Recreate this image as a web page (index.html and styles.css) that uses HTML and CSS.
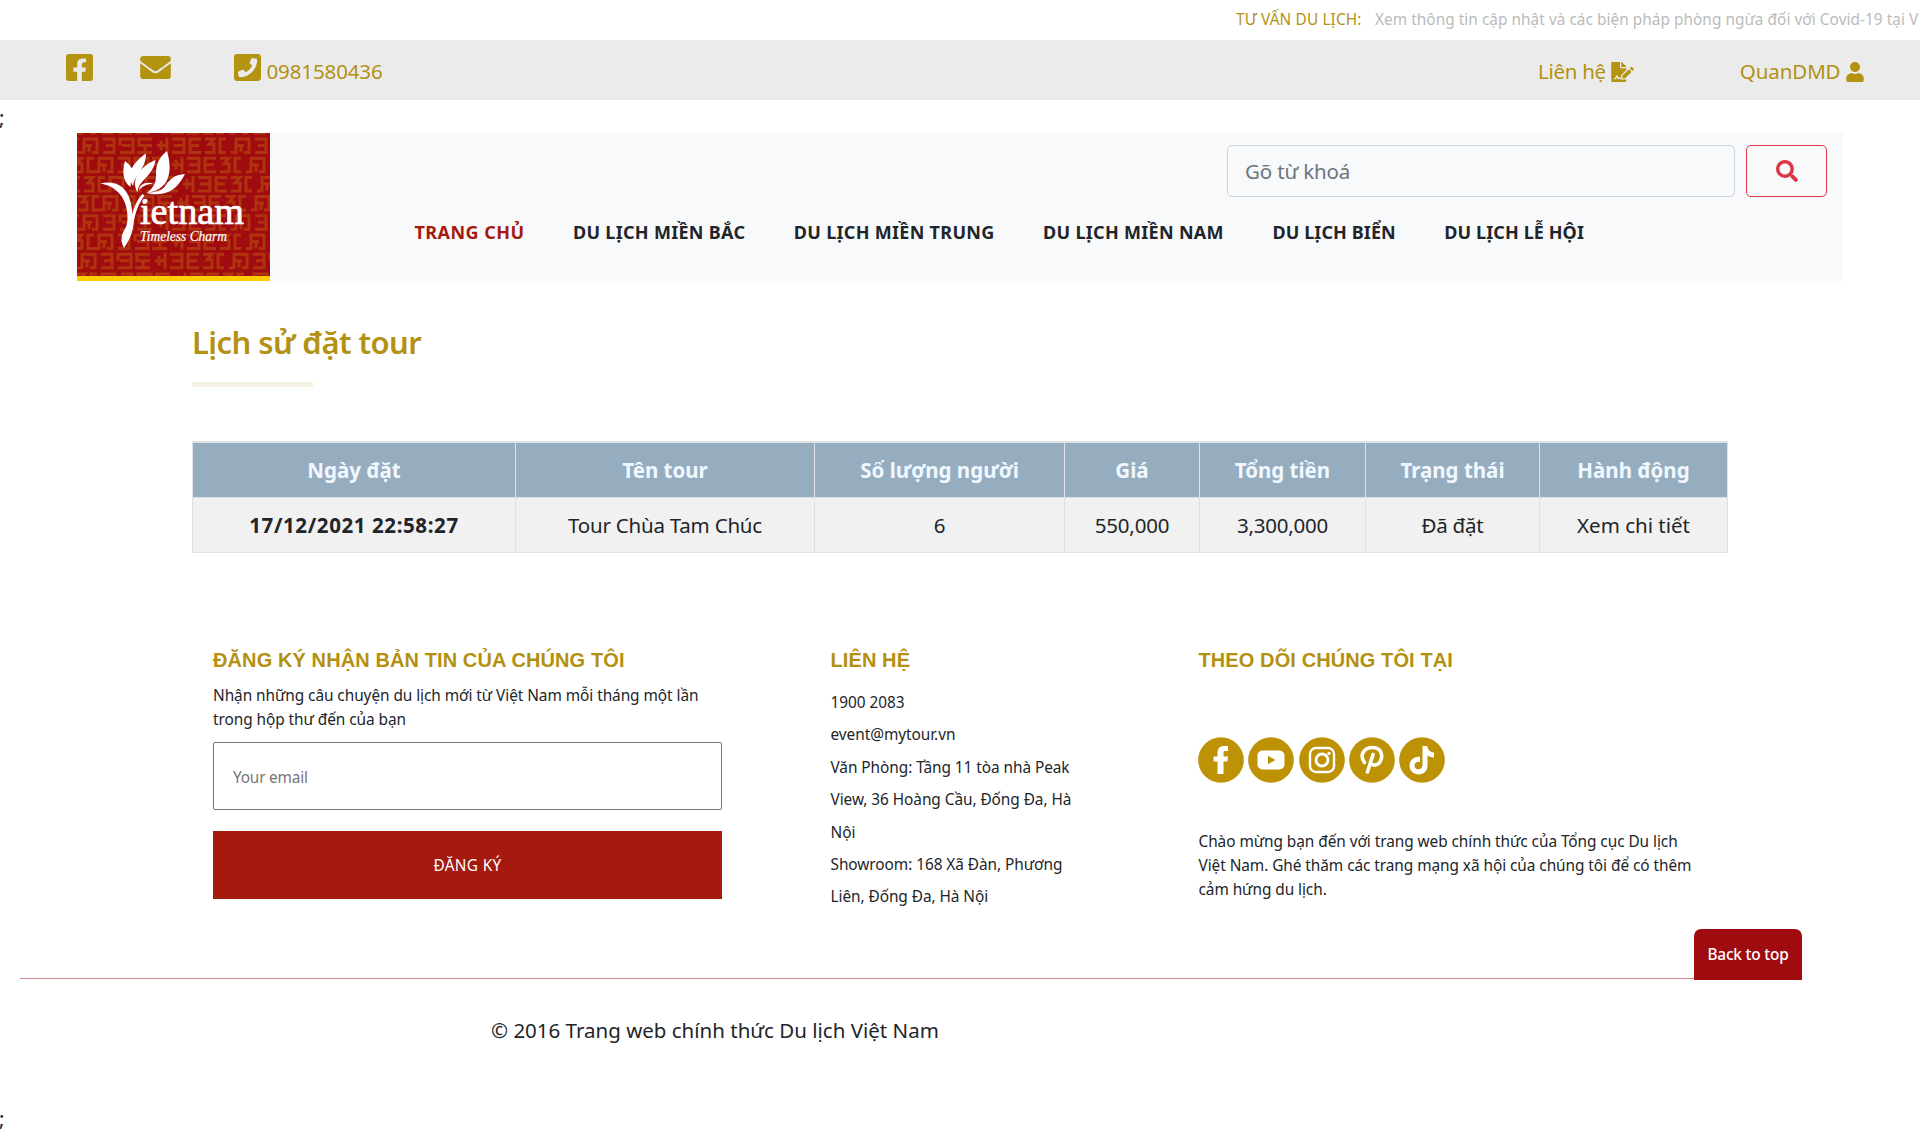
FILE: index.html
```
<!DOCTYPE html>
<html lang="vi">
<head>
<meta charset="utf-8">
<title>Lịch sử đặt tour</title>
<link rel="stylesheet" href="styles.css">
</head>
<body>
<div class="notice"><span class="notice-label">TƯ VẤN DU LỊCH:</span><span class="notice-text">Xem thông tin cập nhật và các biện pháp phòng ngừa đối với Covid-19 tại V</span></div>

<div class="contact-bar">
  <svg class="ico ico-fb" viewBox="0 32 448 448"><path d="M400 32H48A48 48 0 0 0 0 80v352a48 48 0 0 0 48 48h137.25V327.69h-63V256h63v-54.64c0-62.15 37-96.48 93.67-96.48 27.14 0 55.52 4.84 55.52 4.84v61h-31.27c-30.81 0-40.42 19.12-40.42 38.73V256h68.78l-11 71.69h-57.78V480H400a48 48 0 0 0 48-48V80a48 48 0 0 0-48-48z"/></svg>
  <svg class="ico ico-mail" viewBox="0 64 512 384"><path d="M502.3 190.8c3.9-3.1 9.7-.2 9.7 4.7V400c0 26.5-21.5 48-48 48H48c-26.5 0-48-21.5-48-48V195.6c0-5 5.7-7.8 9.7-4.7 22.4 17.4 52.1 39.5 154.1 113.6 21.1 15.4 56.7 47.8 92.2 47.6 35.7.3 72-32.8 92.3-47.6 102-74.1 131.6-96.3 154-113.7zM256 320c23.2.4 56.6-29.2 73.4-41.4 132.7-96.3 142.8-104.7 173.4-128.7 5.8-4.5 9.2-11.5 9.2-18.9v-19c0-26.5-21.5-48-48-48H48c-26.5 0-48 21.5-48 48v19c0 7.4 3.4 14.3 9.2 18.9 30.6 23.9 40.7 32.4 173.4 128.7 16.8 12.2 50.2 41.8 73.4 41.4z"/></svg>
  <svg class="ico ico-phone" viewBox="0 32 448 448"><path d="M400 32H48C21.49 32 0 53.49 0 80v352c0 26.51 21.49 48 48 48h352c26.51 0 48-21.49 48-48V80c0-26.51-21.49-48-48-48zM94 416c-7.033 0-13.057-4.873-14.616-11.627l-14.998-65a15 15 0 0 1 8.707-17.16l69.998-29.999a15 15 0 0 1 17.518 4.289l30.997 37.885c48.944-22.963 88.297-62.858 110.781-110.78l-37.886-30.997a15.001 15.001 0 0 1-4.289-17.518l30-69.998a15 15 0 0 1 17.16-8.707l65 14.998A14.997 14.997 0 0 1 384 126c0 160.292-129.945 290-290 290z"/></svg>
  <span class="phone">0981580436</span>
  <a class="bar-link contact">Liên hệ <svg class="ico" width="23" height="20" viewBox="0 0 576 512"><path d="M218.17 424.14c-2.95-5.92-8.09-6.52-10.17-6.52s-7.22.59-10.02 6.19l-7.67 15.34c-6.37 12.78-25.03 11.37-29.48-2.09L144 386.59l-10.61 31.88c-5.89 17.66-22.38 29.53-41 29.53H80c-8.84 0-16-7.16-16-16s7.16-16 16-16h12.39c4.83 0 9.11-3.08 10.64-7.66l18.19-54.64c3.3-9.81 12.44-16.41 22.78-16.41s19.48 6.59 22.77 16.41l13.88 41.64c19.75-16.19 54.06-9.7 66 14.16 1.89 3.78 5.49 5.95 9.36 6.26v-82.12l128-127.09V160H248c-13.2 0-24-10.8-24-24V0H24C10.7 0 0 10.7 0 24v464c0 13.3 10.7 24 24 24h336c13.3 0 24-10.7 24-24v-40l-128-.11c-16.12-.31-30.58-9.28-37.83-23.75zM384 121.9c0-6.3-2.5-12.4-7-16.9L279.1 7c-4.5-4.5-10.6-7-17-7H256v128h128v-6.1zm-96 225.06V416h68.99l161.68-162.78-67.88-67.88L288 346.96zm280.54-179.63l-31.87-31.87c-9.94-9.94-26.07-9.94-36.01 0l-27.25 27.25 67.88 67.88 27.25-27.25c9.95-9.94 9.95-26.07 0-36.01z"/></svg></a>
  <a class="bar-link user">QuanDMD <svg class="ico" width="18" height="20" viewBox="0 0 448 512"><path d="M224 256c70.7 0 128-57.3 128-128S294.7 0 224 0 96 57.3 96 128s57.3 128 128 128zm89.6 32h-16.7c-22.2 10.2-46.9 16-72.9 16s-50.6-5.8-72.9-16h-16.7C60.2 288 0 348.2 0 422.4V464c0 26.5 21.5 48 48 48h352c26.5 0 48-21.5 48-48v-41.6c0-74.2-60.2-134.4-134.4-134.4z"/></svg></a>
</div>
<div class="stray">;</div>

<header class="header">
  <svg class="logo" width="193" height="148" viewBox="0 0 193 148">
    <defs>
      <g id="motif" fill="none" stroke="#b0330f" stroke-width="3">
        <path d="M0 15h5V1.500h13V15h-5M5 8h8M10 8v7M18 8"/>
        <path d="M24 1.500h11V15H24M27 8h8"/>
        <path d="M41 8V1.500h13V15H41M43 8h9"/>
        <path d="M58 1.500h15M60 1.500V8h13M66 8v7M58 15h15"/>
        <path d="M88 0v16M78 8h10M82 3v10"/>
        <path d="M93 1.500h12V15H93M95 8h10"/>
        <path d="M122 1.500h-11V15h11M111 8h9"/>
        <path d="M126 1.500h9L130 7h5v8h-9"/>
        <path d="M147 1.500h-6V15h6"/>
      </g>
      <g id="strip"><use href="#motif" x="-147"/><use href="#motif"/><use href="#motif" x="152"/></g>
      <clipPath id="frame"><path d="M0 0h193v143H0z"/></clipPath>
    </defs>
    <path fill="#9f0b0e" d="M0 0h193v148H0z"/>
    <g clip-path="url(#frame)">
      <use href="#strip" x="0" y="-14.700"/>
      <use href="#strip" x="2" y="4.500"/>
      <use href="#strip" x="17" y="23.700"/>
      <use href="#strip" x="28" y="42.900"/>
      <use href="#strip" x="22" y="62.100"/>
      <use href="#strip" x="2" y="81.300"/>
      <use href="#strip" x="17" y="100.500"/>
      <use href="#strip" x="0" y="119.700"/>
      <use href="#strip" x="20" y="139.500"/>
    </g>
    <path fill="#fc0" d="M0 143h193v5H0z"/>
    <g fill="#fff">
      <path d="M23 50.500C38 47 49 53 53 67c1.500 5 2 9 2.300 14C57 74 60 67 65.500 61l2 1.500C61 71 58 81 56.500 91c-.8 9-4.500 17-9.500 24-3-6-4-12 1.500-20 2-4 2.500-9 1.500-17C48 63 38 52.500 23 50.500z"/>
      <path d="M48 28c-3 9-2.500 21 5.500 26 .3-6 1.500-10 3-13C56 35 52 31 48 28z"/>
      <path d="M69 20.500C57 29 48 40 56 53c2-12 13-17 13-32.500z"/>
      <path d="M78.500 27C64 33 53 46 60.500 59.500 61 47 76 44 78.500 27z"/>
      <path d="M90 18C79 27 79 35 79 43c0 7-3 12-9 17 20-3 27-18 20-42z"/>
      <path d="M108 41c-11 1-15 5-19 11s-10 7-20 8c23 5 32-6 39-19z"/>
      <path d="M62 57c1-6 8-9 14-6-6-.5-10 2-14 6z"/>
      <circle cx="67.500" cy="69" r="2"/>
    </g>
    <text class="logo-name" x="63" y="91" textLength="104" lengthAdjust="spacingAndGlyphs">ietnam</text>
    <text class="logo-tag" x="63" y="108" textLength="87" lengthAdjust="spacingAndGlyphs">Timeless Charm</text>
  </svg>
  <div class="header-main">
    <form class="search">
      <div class="search-box">Gõ từ khoá</div>
      <div class="search-btn"><svg width="22" height="22" viewBox="0 0 512 512" fill="#dc3545"><path d="M505 442.700L405.300 343c-4.500-4.500-10.600-7-17-7H372c27.600-35.300 44-79.700 44-128C416 93.100 322.900 0 208 0S0 93.100 0 208s93.100 208 208 208c48.300 0 92.700-16.400 128-44v16.300c0 6.400 2.500 12.500 7 17l99.700 99.700c9.400 9.400 24.600 9.400 33.900 0l28.300-28.300c9.400-9.400 9.400-24.600.1-34zM208 336c-70.700 0-128-57.200-128-128 0-70.700 57.200-128 128-128 70.700 0 128 57.200 128 128 0 70.700-57.200 128-128 128z"/></svg></div>
    </form>
    <nav class="nav">
      <a class="active">TRANG CHỦ</a><a>DU LỊCH MIỀN BẮC</a><a>DU LỊCH MIỀN TRUNG</a><a>DU LỊCH MIỀN NAM</a><a class="tight">DU LỊCH BIỂN</a><a class="tight">DU LỊCH LỄ HỘI</a>
    </nav>
  </div>
</header>

<main class="content">
  <h1>Lịch sử đặt tour</h1>
  <div class="rule"></div>
  <table class="orders">
    <colgroup><col style="width:323px"><col style="width:299px"><col style="width:250px"><col style="width:135px"><col style="width:166px"><col style="width:174px"><col style="width:188px"></colgroup>
    <thead><tr><th>Ngày đặt</th><th>Tên tour</th><th>Số lượng người</th><th>Giá</th><th>Tổng tiền</th><th>Trạng thái</th><th>Hành động</th></tr></thead>
    <tbody><tr><th class="date">17/12/2021 22:58:27</th><td>Tour Chùa Tam Chúc</td><td>6</td><td>550,000</td><td>3,300,000</td><td>Đã đặt</td><td class="detail">Xem chi tiết</td></tr></tbody>
  </table>
</main>

<footer class="footer">
  <section class="newsletter">
    <h2>ĐĂNG KÝ NHẬN BẢN TIN CỦA CHÚNG TÔI</h2>
    <p>Nhận những câu chuyện du lịch mới từ Việt Nam mỗi tháng một lần<br>trong hộp thư đến của bạn</p>
    <div class="email">Your email</div>
    <div class="submit">ĐĂNG KÝ</div>
  </section>
  <section class="office">
    <h2>LIÊN HỆ</h2>
    <p>1900 2083<br>event@mytour.vn<br>Văn Phòng: Tầng 11 tòa nhà Peak<br>View, 36 Hoàng Cầu, Đống Đa, Hà<br>Nội<br>Showroom: 168 Xã Đàn, Phương<br>Liên, Đống Đa, Hà Nội</p>
  </section>
  <section class="follow">
    <h2>THEO DÕI CHÚNG TÔI TẠI</h2>
    <div class="social">
      <svg viewBox="0 0 46 46"><circle cx="23" cy="23" r="22.800"/><path fill="#fff" d="M19.500 37V24.500h-4v-5h4V16c0-4.500 2.500-7 6.500-7H30v5h-2.500c-1.500 0-2 .8-2 2v3.500H30l-.6 5h-3.900V37z"/></svg>
      <svg viewBox="0 0 46 46"><circle cx="23" cy="23" r="22.800"/><rect x="9.500" y="13.500" width="27" height="19" rx="5" fill="#fff"/><path d="M20 18.800v8.400l7.500-4.200z"/></svg>
      <svg viewBox="0 0 46 46"><circle cx="23" cy="23" r="22.800"/><g fill="none" stroke="#fff" stroke-width="2.400"><rect x="11" y="11" width="24" height="24" rx="6"/><circle cx="23" cy="23" r="6" stroke-width="2.800"/></g><circle cx="30" cy="16.500" r="1.700" fill="#fff"/></svg>
      <svg viewBox="0 0 46 46"><circle cx="23" cy="23" r="22.800"/><path fill="none" stroke="#fff" stroke-width="3.600" stroke-linecap="round" d="M15.500 25.500C10 18 15 10.500 23.500 10.500c7 0 10 5 9 10.500-1.200 7-8 9-11 5M24 17.500L18.500 35"/></svg>
      <svg viewBox="0 0 46 46"><circle cx="23" cy="23" r="22.800"/><path fill="#fff" d="M23.500 9h4.800c.5 4 3 6.200 6.700 6.500v5c-2.500 0-4.700-.8-6.500-2v10c0 12-17.500 11.500-18 .5 0-6 4.500-9.800 10.500-9.200v5.200c-3-.7-5.500 1-5.500 3.800 0 4.700 8 5 8-1z"/></svg>
    </div>
    <p>Chào mừng bạn đến với trang web chính thức của Tổng cục Du lịch<br>Việt Nam. Ghé thăm các trang mạng xã hội của chúng tôi để có thêm<br>cảm hứng du lịch.</p>
  </section>
</footer>
<div class="bottom-line"><a class="to-top">Back to top</a></div>
<div class="copyright">© 2016 Trang web chính thức Du lịch Việt Nam</div>
<div class="stray stray-end">;</div>
</body>
</html>
```
FILE: styles.css
```
* { box-sizing: border-box; }
body { margin: 0; height: 1134px; overflow: hidden; background: #fff; color: #212529; font: 20.5px/32px "Noto Sans", "Open Sans", sans-serif; }
svg { display: block; flex: none; }
h1, h2, p { margin: 0; }

.notice { display: flex; height: 40px; padding-left: 1236px; font-size: 15.4px; line-height: 40px; white-space: nowrap; overflow: hidden; }
.notice-label { width: 139px; color: #b39113; letter-spacing: .12px; }
.notice-text { color: #bbb; letter-spacing: .03px; }

.contact-bar { display: flex; height: 60px; padding-left: 65.500px; background: #ebebeb; color: #b39113; line-height: 62px; white-space: nowrap; }
.ico { fill: #b39310; }
.ico-fb { width: 27px; height: 27px; margin-top: 14px; }
.ico-mail { width: 31px; height: 23px; margin: 16px 63px 0 47.500px; }
.ico-phone { width: 27px; height: 27px; margin: 14px 5.500px 0 0; }
.phone { letter-spacing: -.12px; }
.bar-link { display: flex; gap: 5px; letter-spacing: -.3px; }
.bar-link .ico { margin-top: 22px; }
.contact { margin-left: auto; }
.user { margin: 0 56.500px 0 106px; letter-spacing: -.1px; }

.stray { height: 33px; margin-left: -1px; line-height: 34px; }

.header { display: flex; width: 1766px; height: 148px; margin-left: 77px; background: #f8f9fb; }
.logo-name { font: 38px "Liberation Serif", serif; fill: #fff; stroke: #fff; stroke-width: .7px; }
.logo-tag { font: italic 14px "Liberation Serif", serif; fill: #fff; stroke: #fff; stroke-width: .2px; }
.header-main { flex: 1; padding: 12px 16px 0 144.500px; }
.search { display: flex; justify-content: flex-end; gap: 11px; }
.search-box { width: 508px; height: 52px; padding-left: 17px; border: 1px solid #ced4da; border-radius: 5px; color: #6c757d; line-height: 51px; letter-spacing: -.17px; }
.search-btn { display: grid; place-items: center; width: 81px; height: 52px; border: 1px solid #dc3545; border-radius: 5px; }
.nav { display: flex; gap: 48.500px; margin-top: 19px; font-size: 18px; font-weight: 700; line-height: 32px; letter-spacing: .3px; white-space: nowrap; }
.nav .active { color: #a6190f; letter-spacing: .45px; }
.nav .tight { letter-spacing: .1px; }

.content { width: 1536px; margin: 0 auto; }
h1 { padding-top: 41px; color: #b39113; font-size: 31px; font-weight: 600; line-height: 41px; letter-spacing: -.58px; }
.rule { width: 121px; height: 5px; margin: 19px 0 54px; background: #f6f3e4; }
.orders { width: 1535px; table-layout: fixed; border-collapse: collapse; text-align: center; }
.orders th, .orders td { height: 55px; padding: 0; border: 1px solid #dee2e6; line-height: 54px; }
.orders thead th { border-top-width: 2px; background: #96adc0; color: #f0f8ff; font-weight: 700; }
.orders tbody tr { background: #f1f1f1; }
.orders td { letter-spacing: -.22px; }
.orders .date { letter-spacing: .6px; }
.orders .detail { letter-spacing: 0; }

.footer { display: grid; grid-template-columns: 617.500px 368px 1fr; height: 376px; padding: 91px 0 0 213px; font-size: 15.4px; line-height: 24px; letter-spacing: -.06px; white-space: nowrap; }
h2 { color: #b3910f; font: 700 20px/32px "Liberation Sans", Arial, sans-serif; letter-spacing: .1px; }
.newsletter p { padding-top: 8px; }
.email, .submit { width: 509px; height: 68px; }
.email { margin: 10px 0 21px; padding-left: 19px; border: 1px solid #767676; border-radius: 2px; color: #757575; line-height: 69px; letter-spacing: -.2px; }
.submit { background: #a6190f; color: #fff; line-height: 69px; text-align: center; letter-spacing: .3px; }
.office p { padding-top: 11px; line-height: 32.400px; }
.social { display: flex; gap: 4.300px; margin: 61px 0 47px -.5px; }
.social svg { width: 46px; height: 46px; fill: #bd9204; }

.bottom-line { display: flex; justify-content: flex-end; height: 52px; margin: 0 118px 0 20px; background: linear-gradient(#d58b8d, #d58b8d) 0 49px / 100% 1px no-repeat; }
.to-top { width: 108px; height: 51px; border-radius: 7px 7px 0 0; background: #9f0b0f; color: #fff; font-size: 15.4px; font-weight: 500; line-height: 51px; text-align: center; letter-spacing: -.2px; }
.copyright { padding: 33px 0 1px 491px; }
.stray-end { margin-top: 54px; }
```
